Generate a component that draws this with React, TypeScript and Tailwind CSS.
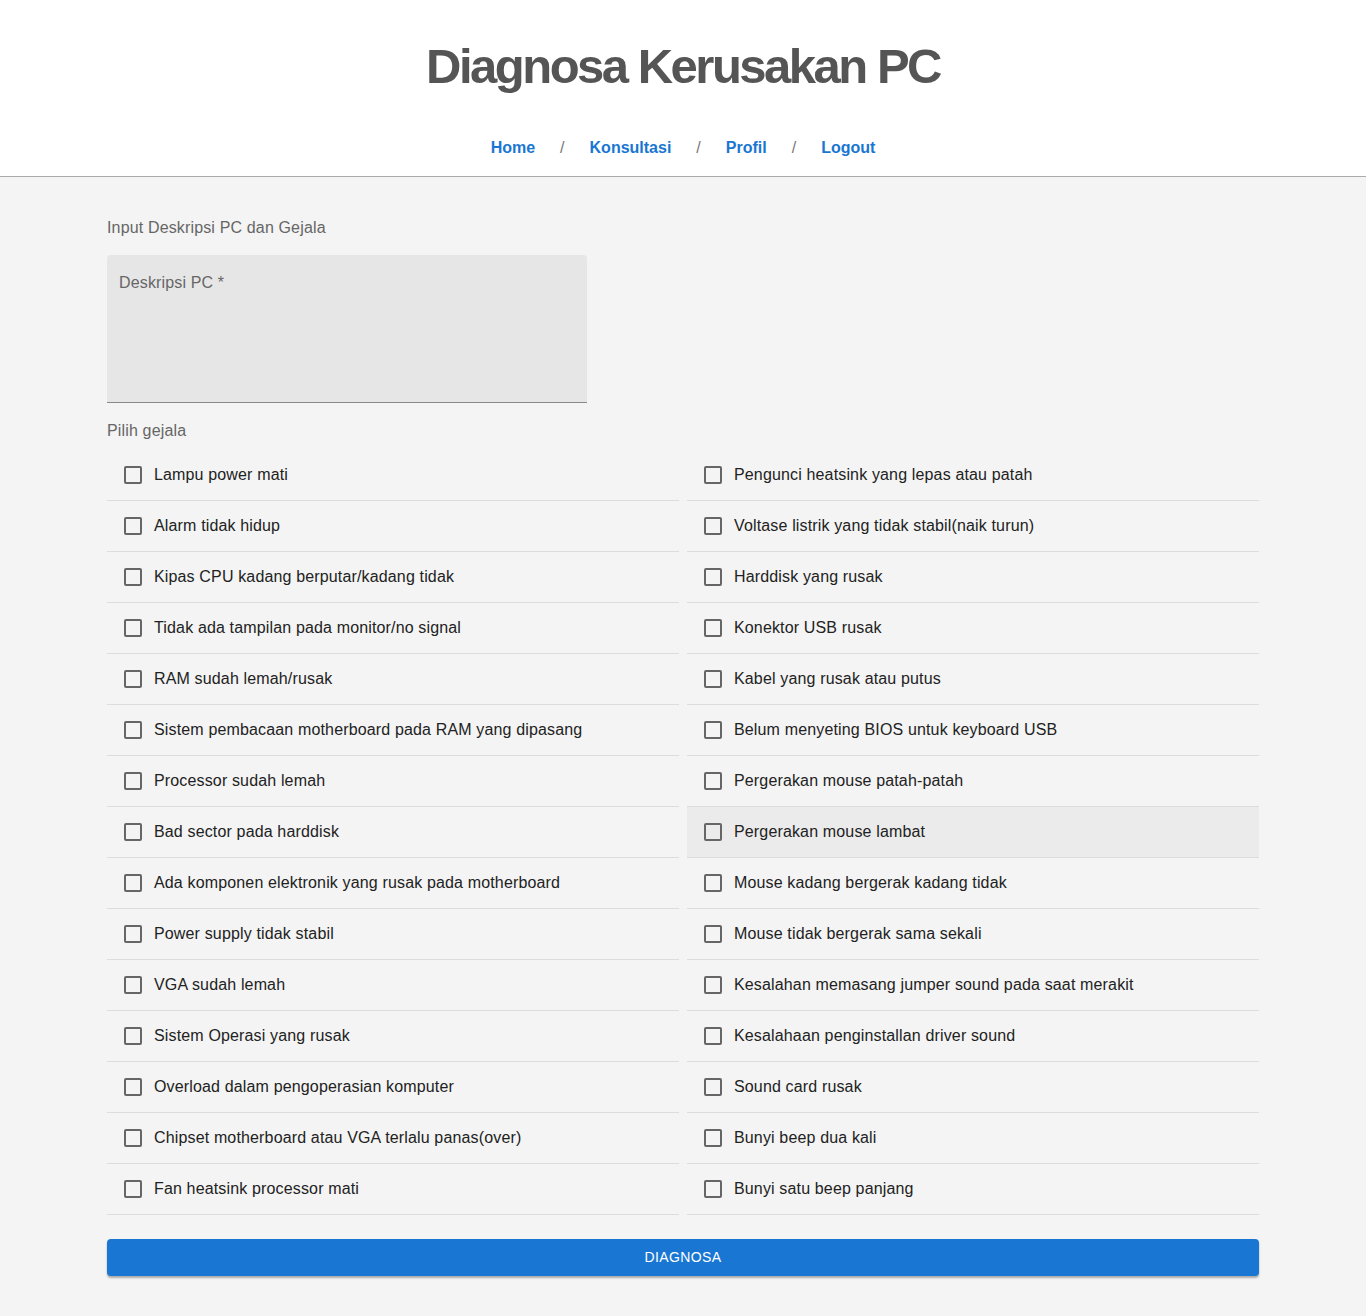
import React from "react";

const left = [
  "Lampu power mati",
  "Alarm tidak hidup",
  "Kipas CPU kadang berputar/kadang tidak",
  "Tidak ada tampilan pada monitor/no signal",
  "RAM sudah lemah/rusak",
  "Sistem pembacaan motherboard pada RAM yang dipasang",
  "Processor sudah lemah",
  "Bad sector pada harddisk",
  "Ada komponen elektronik yang rusak pada motherboard",
  "Power supply tidak stabil",
  "VGA sudah lemah",
  "Sistem Operasi yang rusak",
  "Overload dalam pengoperasian komputer",
  "Chipset motherboard atau VGA terlalu panas(over)",
  "Fan heatsink processor mati",
];

const right = [
  "Pengunci heatsink yang lepas atau patah",
  "Voltase listrik yang tidak stabil(naik turun)",
  "Harddisk yang rusak",
  "Konektor USB rusak",
  "Kabel yang rusak atau putus",
  "Belum menyeting BIOS untuk keyboard USB",
  "Pergerakan mouse patah-patah",
  "Pergerakan mouse lambat",
  "Mouse kadang bergerak kadang tidak",
  "Mouse tidak bergerak sama sekali",
  "Kesalahan memasang jumper sound pada saat merakit",
  "Kesalahaan penginstallan driver sound",
  "Sound card rusak",
  "Bunyi beep dua kali",
  "Bunyi satu beep panjang",
];

function Gejala(props: { label: string; hover?: boolean }) {
  return (
    <label
      className={
        "flex items-center h-[51px] border-b border-[#dcdcdc] pl-[17px] cursor-pointer " +
        (props.hover ? "bg-[#ebebeb]" : "")
      }
    >
      <span className="w-[18px] h-[18px] border-2 border-[#666] rounded-[2px] mr-[12px] shrink-0" />
      <span className="text-[16px] text-[#222] tracking-[0.15px]">{props.label}</span>
    </label>
  );
}

export default function App() {
  const links = ["Home", "Konsultasi", "Profil", "Logout"];
  return (
    <div className="min-h-[1316px] bg-[#f4f4f4] font-['Liberation_Sans',Arial,sans-serif]">
      <header className="bg-white h-[177px] border-b border-[#aaa] flex flex-col items-center">
        <h1 className="mt-[36px] text-[49px] leading-[60px] font-bold text-[#555] tracking-[-2.5px]">
          Diagnosa Kerusakan PC
        </h1>
        <nav className="mt-[40px] flex items-center text-[16px] font-bold">
          {links.map((l, i) => (
            <React.Fragment key={l}>
              {i > 0 && <span className="mx-[25px] font-normal text-[#777]">/</span>}
              <a className="text-[#1976d2] cursor-pointer">{l}</a>
            </React.Fragment>
          ))}
        </nav>
      </header>
      <main className="px-[107px] pt-[41px] pb-[40px]">
        <p className="text-[16px] text-[#666] leading-[20px] tracking-[0.15px]">Input Deskripsi PC dan Gejala</p>
        <div className="mt-[17px] w-[480px] h-[148px] bg-[#e6e6e6] rounded-t-[4px] border-b border-[#888] px-[12px] pt-[16px]">
          <span className="text-[16px] text-[#666] tracking-[0.15px]">Deskripsi PC *</span>
        </div>
        <p className="mt-[18px] text-[16px] text-[#666] leading-[20px] tracking-[0.15px]">Pilih gejala</p>
        <div className="mt-[9px] grid grid-cols-2 gap-x-[8px]">
          <div className="flex flex-col">
            {left.map((g) => (
              <Gejala key={g} label={g} />
            ))}
          </div>
          <div className="flex flex-col">
            {right.map((g) => (
              <Gejala key={g} label={g} hover={g === "Pergerakan mouse lambat"} />
            ))}
          </div>
        </div>
        <button className="mt-[24px] w-full h-[37px] bg-[#1976d2] rounded-[4px] text-white text-[14px] tracking-[0.4px] shadow-[0_2px_2px_rgba(0,0,0,0.3)]">
          DIAGNOSA
        </button>
      </main>
    </div>
  );
}
